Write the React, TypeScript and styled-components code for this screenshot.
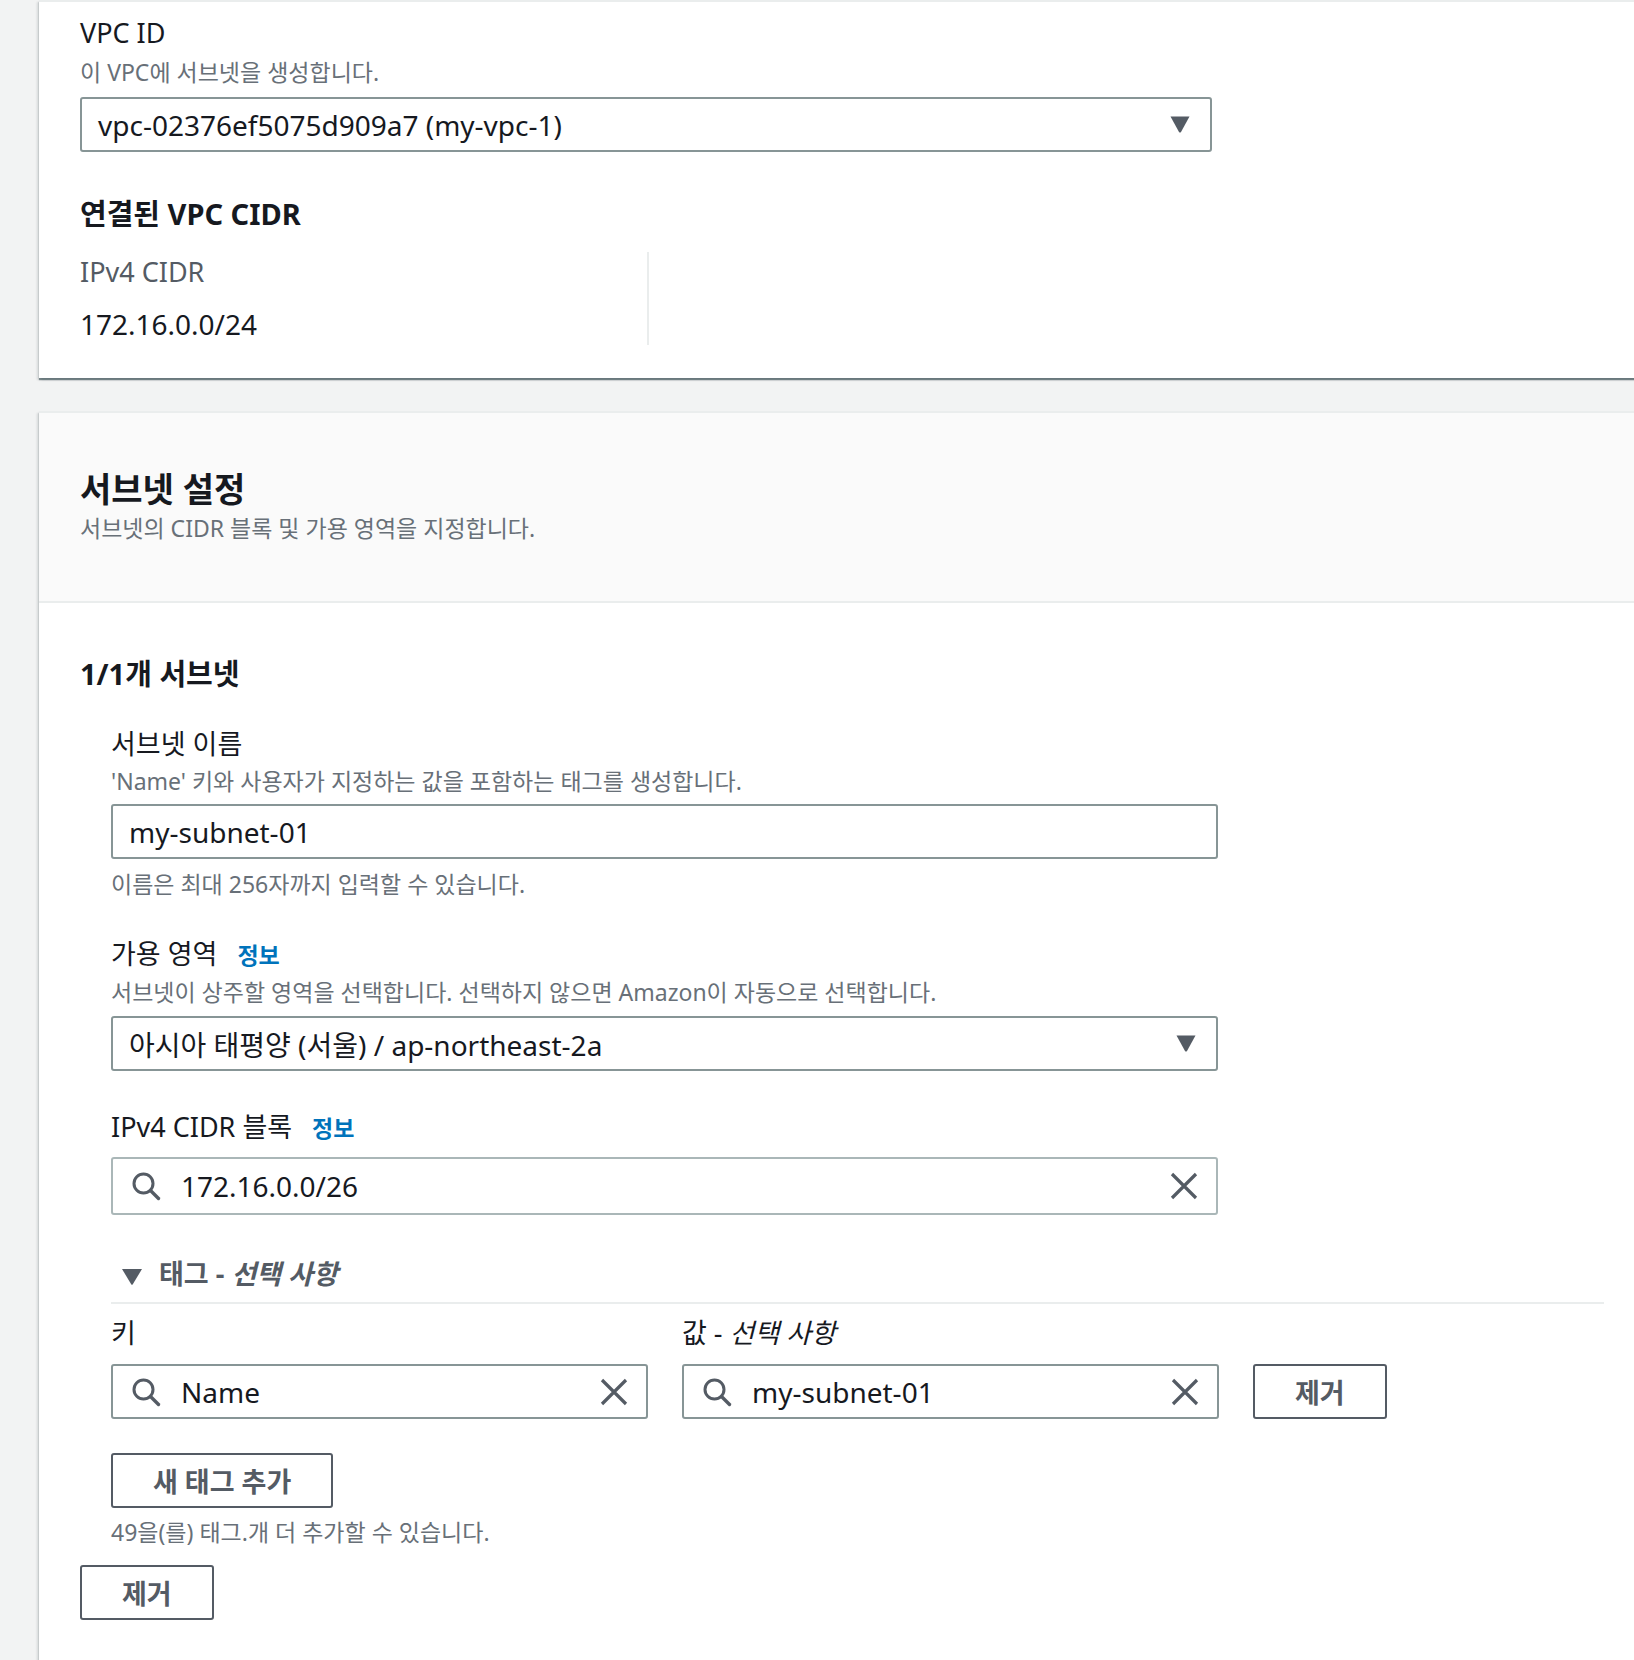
import React from 'react';
import styled, { createGlobalStyle } from 'styled-components';

const GlobalStyle = createGlobalStyle`
  html, body {
    margin: 0;
    padding: 0;
  }
  body {
    background: #f2f3f3;
    font-family: "Noto Sans", "Noto Sans CJK KR", sans-serif;
    color: #16191f;
  }
  * {
    box-sizing: border-box;
  }
`;

const SearchIcon = () => (
  <svg width="30" height="30" viewBox="0 0 30 30" fill="none" stroke="#545b64" strokeWidth="3">
    <circle cx="12.5" cy="12.5" r="9.5" />
    <path d="M19.5 19.5 L27.5 27.5" strokeLinecap="round" strokeWidth="3.4" />
  </svg>
);

const ClearIcon = () => (
  <svg width="28" height="28" viewBox="0 0 28 28" fill="none" stroke="#545b64" strokeWidth="3.2">
    <path d="M2 2 L26 26 M26 2 L2 26" />
  </svg>
);

const Caret = () => (
  <svg width="20" height="17" viewBox="0 0 20 17">
    <path d="M0.5 0.5 H19.5 L11 16 Q10 17.2 9 16 Z" fill="#545b64" />
  </svg>
);

const App: React.FC = () => {
  return (
    <>
      <GlobalStyle />
      <Page>
        <Card>
          <CardBody $top={13} $bottom={33}>
            <Label>VPC ID</Label>
            <Description $gap={7}>이 VPC에 서브넷을 생성합니다.</Description>
            <Select $width={1132} $gap={11}>
              <span>vpc-02376ef5075d909a7 (my-vpc-1)</span>
              <Caret />
            </Select>

            <SectionTitle $gap={42}>연결된 VPC CIDR</SectionTitle>
            <KeyValueRow>
              <KeyValueColumn>
                <KeyLabel>IPv4 CIDR</KeyLabel>
                <KeyValue>172.16.0.0/24</KeyValue>
              </KeyValueColumn>
              <KeyValueColumn />
            </KeyValueRow>
          </CardBody>
        </Card>

        <Card>
          <CardHeader>
            <HeaderTitle>서브넷 설정</HeaderTitle>
            <HeaderDescription>서브넷의 CIDR 블록 및 가용 영역을 지정합니다.</HeaderDescription>
          </CardHeader>
          <CardBody $top={51} $bottom={80}>
            <SectionTitle>1/1개 서브넷</SectionTitle>
            <SubnetBlock>
              <Field>
                <Label>서브넷 이름</Label>
                <Description $gap={5}>'Name' 키와 사용자가 지정하는 값을 포함하는 태그를 생성합니다.</Description>
                <TextInput $width={1107} $gap={9}>my-subnet-01</TextInput>
                <Description $gap={11}>이름은 최대 256자까지 입력할 수 있습니다.</Description>
              </Field>

              <Field>
                <Label>
                  가용 영역 <InfoLink>정보</InfoLink>
                </Label>
                <Description $gap={6}>
                  서브넷이 상주할 영역을 선택합니다. 선택하지 않으면 Amazon이 자동으로 선택합니다.
                </Description>
                <Select $width={1107} $gap={10}>
                  <span>아시아 태평양 (서울) / ap-northeast-2a</span>
                  <Caret />
                </Select>
              </Field>

              <Field>
                <Label>
                  IPv4 CIDR 블록 <InfoLink>정보</InfoLink>
                </Label>
                <SearchBox $width={1107} $gap={12} $tall>
                  <SearchIcon />
                  <SearchText>172.16.0.0/26</SearchText>
                  <ClearIcon />
                </SearchBox>
              </Field>

              <TagSection>
                <ExpandToggle>
                  <ToggleArrow width="20" height="16" viewBox="0 0 20 16">
                    <path d="M0 0 H20 L10.8 15.2 Q10 16.4 9.2 15.2 Z" fill="#545b64" />
                  </ToggleArrow>
                  태그 - <em>선택 사항</em>
                </ExpandToggle>
                <Divider />
                <TagGrid>
                  <Label>키</Label>
                  <Label>
                    값 - <em>선택 사항</em>
                  </Label>
                  <span />
                  <SearchBox>
                    <SearchIcon />
                    <SearchText>Name</SearchText>
                    <ClearIcon />
                  </SearchBox>
                  <SearchBox>
                    <SearchIcon />
                    <SearchText>my-subnet-01</SearchText>
                    <ClearIcon />
                  </SearchBox>
                  <Button>제거</Button>
                </TagGrid>
                <Button $gap={34}>새 태그 추가</Button>
                <Description $gap={10}>49을(를) 태그.개 더 추가할 수 있습니다.</Description>
              </TagSection>
            </SubnetBlock>
            <Button $gap={19}>제거</Button>
          </CardBody>
        </Card>
      </Page>
    </>
  );
};

export default App;

const Page = styled.div`
  min-height: 100vh;
  padding-left: 39px;
  overflow: hidden;
  display: flex;
  flex-direction: column;
  gap: 33px;
`;

const Card = styled.section`
  width: 1640px;
  background: #fff;
  border-top: 2px solid #eaeded;
  box-shadow:
    0 2px 1px 0 rgba(0, 28, 36, 0.45),
    2px 2px 2px 0 rgba(0, 28, 36, 0.12),
    -2px 2px 2px 0 rgba(0, 28, 36, 0.12);
`;

const CardHeader = styled.header`
  background: #fafafa;
  border-bottom: 2px solid #eaeded;
  padding: 55px 41px 59px;
`;

const HeaderTitle = styled.h2`
  margin: 0;
  font-size: 34px;
  line-height: 42px;
  font-weight: 700;
  color: #16191f;
`;

const HeaderDescription = styled.p`
  margin: 4px 0 0;
  font-size: 23px;
  line-height: 28px;
  color: #687078;
`;

const CardBody = styled.div<{ $top: number; $bottom: number }>`
  padding: ${(p) => p.$top}px 41px ${(p) => p.$bottom}px;
  display: flex;
  flex-direction: column;
  align-items: flex-start;
`;

const SectionTitle = styled.h3<{ $gap?: number }>`
  margin: ${(p) => p.$gap ?? 0}px 0 0;
  font-size: 29px;
  line-height: 40px;
  font-weight: 700;
  color: #16191f;
`;

const Label = styled.div`
  font-size: 27px;
  line-height: 36px;
  color: #16191f;

  em {
    font-style: italic;
  }
`;

const InfoLink = styled.a`
  margin-left: 13px;
  font-size: 23px;
  line-height: 1;
  font-weight: 700;
  color: #0073bb;
  text-decoration: none;
`;

const Description = styled.p<{ $gap?: number }>`
  margin: ${(p) => p.$gap ?? 0}px 0 0;
  font-size: 23px;
  line-height: 28px;
  color: #687078;
`;

const Control = styled.div<{ $width?: number; $gap?: number; $tall?: boolean }>`
  width: ${(p) => (p.$width ? `${p.$width}px` : '100%')};
  height: ${(p) => (p.$tall ? 58 : 55)}px;
  margin-top: ${(p) => p.$gap ?? 0}px;
  display: flex;
  align-items: center;
  background: #fff;
  border: 2px solid ${(p) => (p.$tall ? '#aab7b8' : '#879596')};
  border-radius: 3px;
  font-size: 28px;
  color: #16191f;
`;

const Select = styled(Control)`
  justify-content: space-between;
  padding: 0 20px 0 16px;
`;

const TextInput = styled(Control)`
  padding: 0 16px;
`;

const SearchBox = styled(Control)`
  padding: 0 18px 0 18px;
  gap: 20px;
`;

const SearchText = styled.span`
  flex: 1;
`;

const KeyValueRow = styled.div`
  margin-top: 18px;
  display: flex;
`;

const KeyValueColumn = styled.div`
  width: 567px;
  min-height: 93px;
  padding: 2px 0 3px;
  display: flex;
  flex-direction: column;

  & + & {
    border-left: 2px solid #eaeded;
  }
`;

const KeyLabel = styled.div`
  font-size: 27px;
  line-height: 36px;
  color: #545b64;
`;

const KeyValue = styled.div`
  margin-top: 16px;
  font-size: 28px;
  line-height: 36px;
  color: #16191f;
`;

const SubnetBlock = styled.div`
  margin-top: 32px;
  padding-left: 31px;
  display: flex;
  flex-direction: column;
  align-items: flex-start;
  gap: 38px;
`;

const Field = styled.div`
  display: flex;
  flex-direction: column;
  align-items: flex-start;
`;

const TagSection = styled.div`
  margin-top: 3px;
  display: flex;
  flex-direction: column;
  align-items: flex-start;
`;

const ExpandToggle = styled.div`
  padding-left: 11px;
  font-size: 27px;
  line-height: 36px;
  font-weight: 700;
  color: #545b64;

  em {
    font-style: italic;
  }
`;

const ToggleArrow = styled.svg`
  margin-right: 17px;
  vertical-align: -1px;
`;

const Divider = styled.hr`
  width: 1493px;
  margin: 10px 0 0;
  border: none;
  border-top: 2px solid #eaeded;
`;

const TagGrid = styled.div`
  margin-top: 11px;
  display: grid;
  grid-template-columns: 537px 537px auto;
  column-gap: 34px;
  row-gap: 13px;
  align-items: center;
`;

const Button = styled.button<{ $gap?: number }>`
  margin-top: ${(p) => p.$gap ?? 0}px;
  height: 55px;
  padding: 0 40px;
  background: #fff;
  border: 2px solid #545b64;
  border-radius: 3px;
  font-family: inherit;
  font-size: 27px;
  font-weight: 700;
  color: #545b64;
  cursor: pointer;
`;
